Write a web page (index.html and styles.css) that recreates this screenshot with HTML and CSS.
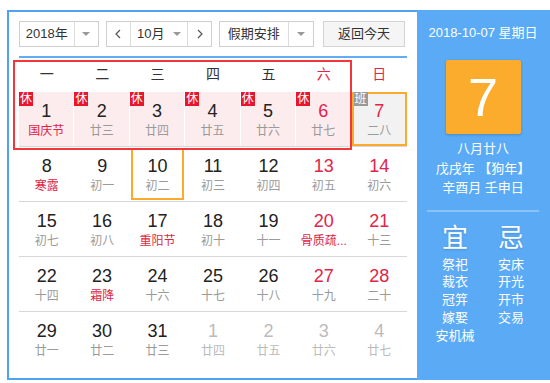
FILE: index.html
```html
<!DOCTYPE html>
<html>
<head>
    <title>万年历</title>
    <link rel="stylesheet" href="styles.css">
</head>
<body>
<div class="calendar">
    <div class="main">
        <div class="toolbar">
            <div class="box year">
                <span class="val">2018年</span>
                <span class="drop"><i class="caret"></i></span>
            </div>
            <div class="box month">
                <span class="nav"><svg width="6" height="10" viewBox="0 0 6 10"><polyline points="5,1 1,5 5,9" fill="none" stroke="#555" stroke-width="1.2"/></svg></span>
                <span class="val month-val">10月 <i class="caret"></i></span>
                <span class="nav"><svg width="6" height="10" viewBox="0 0 6 10"><polyline points="1,1 5,5 1,9" fill="none" stroke="#555" stroke-width="1.2"/></svg></span>
            </div>
            <div class="box holiday-sel">
                <span class="val">假期安排</span>
                <span class="drop"><i class="caret"></i></span>
            </div>
            <div class="btn-today">返回今天</div>
        </div>

        <div class="grid">
            <div class="weekdays">
                <span>一</span><span>二</span><span>三</span><span>四</span><span>五</span>
                <span class="red">六</span><span class="red">日</span>
            </div>

            <div class="week">
                <div class="day rest"><span class="tag">休</span><b>1</b><em class="fest">国庆节</em></div>
                <div class="day rest"><span class="tag">休</span><b>2</b><em>廿三</em></div>
                <div class="day rest"><span class="tag">休</span><b>3</b><em>廿四</em></div>
                <div class="day rest"><span class="tag">休</span><b>4</b><em>廿五</em></div>
                <div class="day rest"><span class="tag">休</span><b>5</b><em>廿六</em></div>
                <div class="day rest"><span class="tag">休</span><b class="red">6</b><em>廿七</em></div>
                <div class="day work today"><span class="tag grey">班</span><b class="red">7</b><em>二八</em></div>
            </div>

            <div class="week">
                <div class="day"><b>8</b><em class="fest">寒露</em></div>
                <div class="day"><b>9</b><em>初一</em></div>
                <div class="day picked"><b>10</b><em>初二</em></div>
                <div class="day"><b>11</b><em>初三</em></div>
                <div class="day"><b>12</b><em>初四</em></div>
                <div class="day"><b class="red">13</b><em>初五</em></div>
                <div class="day"><b class="red">14</b><em>初六</em></div>
            </div>

            <div class="week">
                <div class="day"><b>15</b><em>初七</em></div>
                <div class="day"><b>16</b><em>初八</em></div>
                <div class="day"><b>17</b><em class="fest">重阳节</em></div>
                <div class="day"><b>18</b><em>初十</em></div>
                <div class="day"><b>19</b><em>十一</em></div>
                <div class="day"><b class="red">20</b><em class="fest">骨质疏...</em></div>
                <div class="day"><b class="red">21</b><em>十三</em></div>
            </div>

            <div class="week">
                <div class="day"><b>22</b><em>十四</em></div>
                <div class="day"><b>23</b><em class="fest">霜降</em></div>
                <div class="day"><b>24</b><em>十六</em></div>
                <div class="day"><b>25</b><em>十七</em></div>
                <div class="day"><b>26</b><em>十八</em></div>
                <div class="day"><b class="red">27</b><em>十九</em></div>
                <div class="day"><b class="red">28</b><em>二十</em></div>
            </div>

            <div class="week last">
                <div class="day"><b>29</b><em>廿一</em></div>
                <div class="day"><b>30</b><em>廿二</em></div>
                <div class="day"><b>31</b><em>廿三</em></div>
                <div class="day other"><b>1</b><em>廿四</em></div>
                <div class="day other"><b>2</b><em>廿五</em></div>
                <div class="day other"><b>3</b><em>廿六</em></div>
                <div class="day other"><b>4</b><em>廿七</em></div>
            </div>

            <div class="highlight"></div>
        </div>
    </div>

    <div class="side">
        <div class="side-date">2018-10-07 星期日</div>
        <div class="big-day">7</div>
        <div class="lunar-info">
            <p>八月廿八</p>
            <p>戊戌年 【狗年】</p>
            <p>辛酉月 壬申日</p>
        </div>
        <div class="side-line"></div>
        <div class="almanac">
            <div class="col">
                <h4>宜</h4>
                <p>祭祀</p><p>裁衣</p><p>冠笄</p><p>嫁娶</p><p>安机械</p>
            </div>
            <div class="col">
                <h4>忌</h4>
                <p>安床</p><p>开光</p><p>开市</p><p>交易</p>
            </div>
        </div>
    </div>
</div>
</body>
</html>
```

FILE: styles.css
```css
body {
    margin: 0;
    font-family: "Liberation Sans", "Noto Sans CJK SC", sans-serif;
    color: #222;
}
.calendar {
    display: flex;
    margin: 10px 0 0 7px;
    width: 545px;
    height: 370px;
}
.main {
    width: 410px;
    box-sizing: border-box;
    border: 2px solid #4fa2f3;
    border-right: none;
    padding: 9px 10px 0 10px;
}

/* toolbar */
.toolbar {
    display: flex;
    height: 26px;
    font-size: 13px;
    line-height: 24px;
    color: #333;
}
.box {
    display: flex;
    border: 1px solid #cfcfcf;
    background: #fff;
    box-sizing: border-box;
    height: 26px;
}
.val {
    text-align: center;
}
.drop {
    border-left: 1px solid #dcdcdc;
    display: flex;
    align-items: center;
    justify-content: center;
}
.caret {
    display: inline-block;
    width: 0;
    height: 0;
    border-left: 4px solid transparent;
    border-right: 4px solid transparent;
    border-top: 4px solid #999;
    vertical-align: middle;
}
.year {
    width: 80px;
}
.year .val {
    width: 55px;
}
.year .drop {
    width: 24px;
}
.month {
    width: 106px;
    margin-left: 7px;
}
.month .nav {
    width: 23px;
    display: flex;
    align-items: center;
    justify-content: center;
}
.month-val {
    width: 58px;
    border-left: 1px solid #dcdcdc;
    border-right: 1px solid #dcdcdc;
}
.month-val .caret {
    margin-left: 5px;
    margin-top: -2px;
}
.holiday-sel {
    width: 95px;
    margin-left: 7px;
}
.holiday-sel .val {
    width: 69px;
}
.holiday-sel .drop {
    width: 25px;
}
.btn-today {
    width: 82px;
    height: 26px;
    box-sizing: border-box;
    margin-left: 9px;
    border: 1px solid #d3d3d3;
    background: #f5f5f5;
    text-align: center;
    color: #333;
}

/* grid */
.grid {
    position: relative;
    margin-top: 9px;
    border-top: 2px solid #63adf5;
}
.weekdays {
    display: grid;
    grid-template-columns: repeat(7, 1fr);
    height: 34px;
    font-size: 14px;
    line-height: 32px;
    text-align: center;
    color: #333;
}
.red {
    color: #e2234a;
}
.week {
    display: grid;
    grid-template-columns: repeat(7, 1fr);
    height: 55px;
    box-sizing: border-box;
    border-bottom: 1px solid #d7d7d7;
}
.week.last {
    border-bottom: none;
}
.day {
    position: relative;
    display: flex;
    flex-direction: column;
    align-items: center;
    padding-top: 8px;
}
.day b {
    font-weight: normal;
    font-size: 18px;
    line-height: 22px;
}
.day em {
    font-style: normal;
    font-size: 12px;
    line-height: 18px;
    color: #9a9a9a;
    white-space: nowrap;
}
.day em.fest {
    color: #e01f45;
}
.day.other b,
.day.other em {
    color: #bbb;
}
.day.rest {
    background: #fdeced;
    border-right: 1px solid #fff;
}
.day.work {
    background: #f2f2f2;
}
.day.today {
    outline: 2px solid #fbaa2e;
    outline-offset: -2px;
}
.day.picked {
    outline: 2px solid #fbaa2e;
    outline-offset: -3px;
}
.tag {
    position: absolute;
    left: 0;
    top: 0;
    width: 14px;
    height: 14px;
    background: #e8152b;
    color: #fff;
    font-size: 12px;
    line-height: 14px;
    text-align: center;
}
.tag.grey {
    background: #999;
    left: 2px;
}
.highlight {
    position: absolute;
    left: -6px;
    top: 2px;
    width: 339px;
    height: 90px;
    box-sizing: border-box;
    border: 2px solid #f4363b;
}

/* side panel */
.side {
    width: 135px;
    box-sizing: border-box;
    padding-right: 3px;
    background: #5aaaf6;
    color: #fff;
    text-align: center;
}
.side-date {
    margin-top: 14px;
    font-size: 13px;
    line-height: 18px;
}
.big-day {
    width: 75px;
    height: 74px;
    margin: 18px auto 0;
    background: #fbac2c;
    border-radius: 2px;
    box-shadow: 0 1px 3px rgba(0, 0, 0, 0.2);
    font-size: 54px;
    line-height: 74px;
}
.lunar-info {
    margin-top: 5px;
    font-size: 13px;
    line-height: 19.5px;
}
.lunar-info p {
    margin: 0;
}
.side-line {
    height: 2px;
    margin: 12px 10px 0;
    background: rgba(255, 255, 255, 0.3);
}
.almanac {
    display: flex;
    justify-content: center;
    margin-top: 11px;
}
.almanac .col {
    width: 56px;
}
.almanac h4 {
    margin: 0 0 3px;
    font-size: 26px;
    line-height: 30px;
    font-weight: normal;
    text-shadow: 0 1px 2px rgba(0, 0, 0, 0.15);
}
.almanac p {
    margin: 0;
    font-size: 13px;
    line-height: 17.8px;
}
```
